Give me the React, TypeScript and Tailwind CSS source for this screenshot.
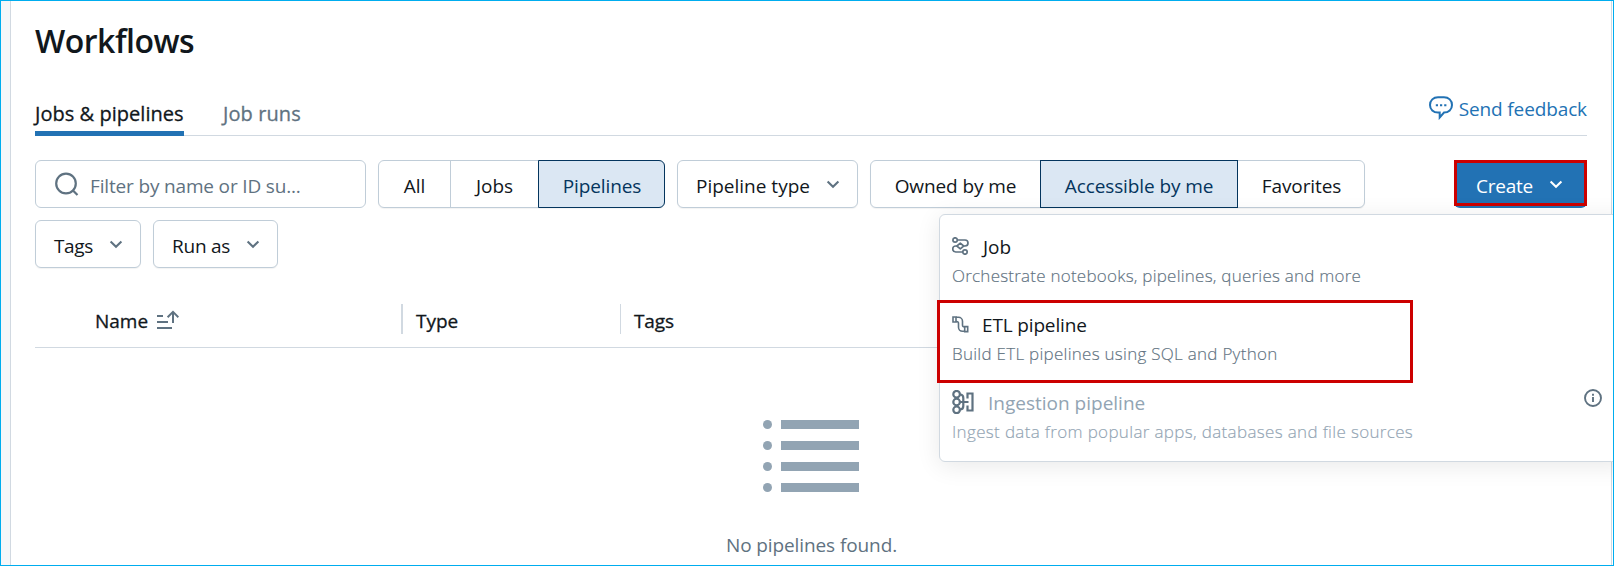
import React from "react";

const Chevron = ({ className = "text-[#5f7281]" }: { className?: string }) => (
  <svg width="14" height="10" viewBox="0 0 14 10" fill="none" stroke="currentColor" strokeWidth="2.1" className={`shrink-0 ${className}`}>
    <path d="M1.6 2.500 7 7.700 12.400 2.500" />
  </svg>
);

const SearchIcon = () => (
  <svg width="24" height="24" viewBox="0 0 24 24" fill="none" stroke="currentColor" strokeWidth="2.2" className="shrink-0 text-[#5f7281]">
    <circle cx="11" cy="11.500" r="9.800" />
    <path d="m17.500 18 5 5" />
  </svg>
);

const SortIcon = () => (
  <svg width="23" height="20" viewBox="0 0 23 20" fill="none" stroke="currentColor" strokeWidth="2" className="shrink-0 text-[#5f7281]">
    <path d="M1 6h6M1 12h11M1 18h15M17 1.8V13M11.6 7.2 17 1.8l5.4 5.4" />
  </svg>
);

const SpeechIcon = () => (
  <svg width="24" height="24" viewBox="0 0 24 24" fill="none" stroke="currentColor" strokeWidth="2" className="shrink-0">
    <path d="M9 1.2h6c4.600 0 8 3.200 8 7.700s-3.400 7.700-8 7.700L10.700 21.500V16.600H9c-4.600 0-8-3.200-8-7.700s3.400-7.700 8-7.700Z" />
    <path d="M6.800 9.300h2.200M11 9.300h2.200M15.200 9.300h2.200" />
  </svg>
);

const JobIcon = () => (
  <svg width="17" height="18" viewBox="0 0 17 18" fill="none" stroke="currentColor" strokeWidth="1.7" className="shrink-0 text-[#5f7281]">
    <circle cx="3.100" cy="3" r="2.200" />
    <path d="m8.300 6.200 3.400 2.800-3.400 2.800-3.400-2.800z" strokeLinejoin="round" />
    <circle cx="13" cy="15" r="2.200" />
    <path d="M5.300 3H13a3 3 0 0 1 0 6h-1.500M5 9H3.700a3 3 0 0 0 0 6h7.200" />
  </svg>
);

const EtlIcon = () => (
  <svg width="17" height="17" viewBox="0 0 17 17" fill="none" stroke="currentColor" strokeWidth="1.6" className="shrink-0 text-[#5f7281]">
    <path d="M1 1h3v5H1zM12.700 10.600h3v5h-3z" />
    <path d="M4 1.300h2.500a4 4 0 0 1 4 4v3.700a2 2 0 0 0 2 2M4 5.500h.5a2 2 0 0 1 2 2v3.800a4 4 0 0 0 4 4h2" />
  </svg>
);

const IngestIcon = () => (
  <svg width="22" height="24" viewBox="0 0 22 24" fill="none" stroke="currentColor" strokeWidth="2.2" className="shrink-0 text-[#5f7281]">
    <circle cx="4.600" cy="4.200" r="3.300" />
    <circle cx="4.600" cy="12" r="3.300" />
    <circle cx="4.600" cy="19.800" r="3.300" />
    <path d="M8 12h8.500M8 4.500c2.300 0 3.300 1.400 3.300 3.500v8c0 2.100-1 3.500-3.300 3.500" />
    <path d="M15.500 8.500V3.500h5v17h-5v-5" />
  </svg>
);

const InfoIcon = () => (
  <svg width="18" height="18" viewBox="0 0 18 18" fill="none" stroke="currentColor" strokeWidth="1.9" className="shrink-0 text-[#5f7281]">
    <circle cx="9" cy="9" r="8" />
    <path d="M9 8v5M9 4.800v2" />
  </svg>
);

const box = "flex h-12 items-center border border-[#c0cdd8] bg-white shadow-[0_1px_1px_rgba(0,0,0,0.05)]";
const segment = "flex items-center justify-center pt-1";
const active = "-my-px border border-[#04355d] bg-[#dbe7f3] text-[#04355d]";
const description = "pt-px text-[17px] leading-[27px] font-light [-webkit-text-stroke:0.15px_currentColor]";

function Dropdown({ label, className }: { label: string; className: string }) {
  return (
    <button className={`${box} justify-between rounded-md pr-[17px] pl-[18px] ${className}`}>
      <span className="pt-1">{label}</span>
      <Chevron />
    </button>
  );
}

export default function App() {
  return (
    <div className="relative flex h-[566px] w-[1614px] overflow-hidden border border-[#00adef] bg-white font-['Open_Sans','Noto_Sans',sans-serif] text-[19px] leading-7 whitespace-nowrap text-[#11171c]">
      <div className="w-[10px] shrink-0 border-r border-[#d1d9e1] bg-[#f6f7f9]" />
      <main className="flex flex-1 flex-col border-r border-[#d1d9e1] pr-6 pl-6">
        <h1 className="mt-[18px] h-11 text-[32px] leading-[44px] font-semibold tracking-[-0.5px]">Workflows</h1>

        <div className="mt-[33px] flex h-10 items-stretch border-b border-[#d1d9e1]">
          <nav className="flex gap-[39px] text-[20px] [-webkit-text-stroke:0.3px_currentColor]">
            <span className="-mb-px w-[149px] border-b-[5px] border-[#2272b4] pt-1 tracking-[0.04px]">Jobs &amp; pipelines</span>
            <span className="pt-1 tracking-[0.1px] text-[#5f7281]">Job runs</span>
          </nav>
          <a className="-mt-px ml-auto flex h-7 items-center gap-[6px] text-[#2272b4]">
            <span className="-mt-0.5">
              <SpeechIcon />
            </span>
            <span className="tracking-[-0.12px]">Send feedback</span>
          </a>
        </div>

        <div className="mt-6 flex gap-3">
          <div className="flex h-12 w-[331px] items-center gap-[11px] rounded-md border border-[#c0cdd8] pl-[19px] text-[#5f7281]">
            <SearchIcon />
            <span className="pt-1 tracking-[-0.16px]">Filter by name or ID su...</span>
          </div>
          <div className={`${box} w-[287px] items-stretch rounded-md`}>
            <div className={`${segment} w-[72px] border-r border-[#c0cdd8]`}>All</div>
            <div className={`${segment} w-[87px]`}>Jobs</div>
            <div className={`${segment} ${active} -mr-px flex-1 rounded-r-md pl-px tracking-[-0.1px]`}>Pipelines</div>
          </div>
          <Dropdown label="Pipeline type" className="w-[181px]" />
          <div className={`${box} w-[495px] items-stretch rounded-md tracking-[-0.1px]`}>
            <div className={`${segment} w-[169px]`}>Owned by me</div>
            <div className={`${segment} ${active} w-[198px]`}>Accessible by me</div>
            <div className={`${segment} flex-1 pl-px`}>Favorites</div>
          </div>
          <button className="relative ml-auto flex h-12 w-[133px] items-center justify-between rounded-md bg-[#2272b4] pr-6 pl-[22px] text-white">
            <span className="pt-1 tracking-[-0.25px]">Create</span>
            <Chevron className="text-white" />
            <span className="absolute inset-x-0 top-0 h-[46px] border-[3px] border-[#cc0000]" />
          </button>
        </div>

        <div className="mt-3 flex gap-3">
          <Dropdown label="Tags" className="w-[106px] tracking-[-0.4px]" />
          <Dropdown label="Run as" className="w-[125px] tracking-[-0.25px]" />
        </div>

        <div className="mt-9 flex h-11 shrink-0 items-start border-b border-[#d1d9e1] [-webkit-text-stroke:0.3px_currentColor]">
          <div className="flex h-[30px] w-[366px] items-center gap-2 pt-0.5 pl-[60px]">
            <span className="pt-0.5">Name</span>
            <SortIcon />
          </div>
          <div className="flex h-[30px] w-[219px] items-center border-l-2 border-[#d1d9e1] pt-1 pl-[13px]">Type</div>
          <div className="flex h-[30px] items-center border-l border-[#d1d9e1] pt-1 pl-[13px] tracking-[-0.1px]">Tags</div>
        </div>

        <div className="mt-[72px] flex flex-col items-center">
          <div className="flex flex-col gap-3">
            {[0, 1, 2, 3].map((i) => (
              <div key={i} className="flex gap-[9px]">
                <span className="size-[9px] rounded-full bg-[#92a4b3]" />
                <span className="h-[9px] w-[78px] bg-[#92a4b3]" />
              </div>
            ))}
          </div>
          <p className="mt-[39px] pl-px tracking-[-0.1px] text-[#5f7281]">No pipelines found.</p>
        </div>
      </main>
      <div className="w-px shrink-0" />

      <div className="absolute top-[213px] left-[938px] flex h-[248px] w-[690px] flex-col gap-[22px] rounded-md border border-[#d1d9e1] bg-white pt-[18px] pl-3 shadow-[0_4px_24px_rgba(0,0,0,0.09)]">
        <div>
          <div className="flex items-center gap-[14px]">
            <span className="-mt-0.5">
              <JobIcon />
            </span>
            <span>Job</span>
          </div>
          <p className={`${description} tracking-[0.23px] text-[#5f7281]`}>Orchestrate notebooks, pipelines, queries and more</p>
        </div>
        <div>
          <div className="flex items-center gap-[13px]">
            <span className="-mt-0.5">
              <EtlIcon />
            </span>
            <span className="tracking-[-0.15px]">ETL pipeline</span>
          </div>
          <p className={`${description} tracking-[0.27px] text-[#5f7281]`}>Build ETL pipelines using SQL and Python</p>
        </div>
        <div>
          <div className="flex items-center text-[#92a4b3]">
            <span className="-mt-1.5 -mb-1">
              <IngestIcon />
            </span>
            <span className="ml-[14px]">Ingestion pipeline</span>
            <span className="-mt-1 mb-1.5 ml-auto pr-[26px]">
              <InfoIcon />
            </span>
          </div>
          <p className={`${description} tracking-[0.34px] text-[#92a4b3]`}>Ingest data from popular apps, databases and file sources</p>
        </div>
      </div>
      <div className="absolute top-[299px] left-[936px] h-[83px] w-[476px] border-[3px] border-[#cc0000]" />
      <div className="absolute inset-y-0 right-0 -mr-px w-px bg-[#00adef]" />
    </div>
  );
}
